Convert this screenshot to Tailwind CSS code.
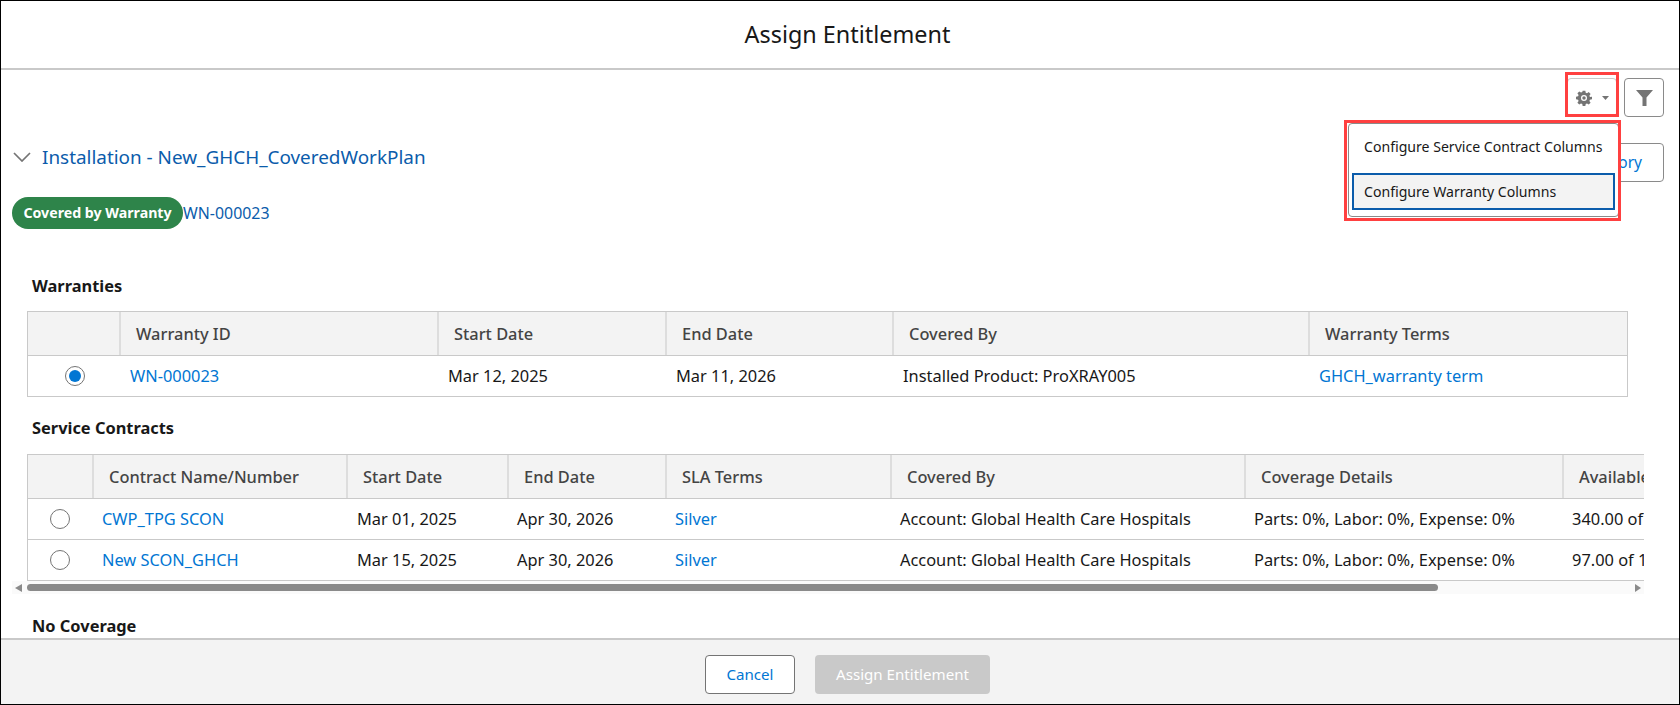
<!DOCTYPE html>
<html lang="en">
<head>
    <meta charset="UTF-8">
    <title>Assign Entitlement</title>
    <script src="https://cdn.jsdelivr.net/npm/@tailwindcss/browser@4"></script>
</head>
<body class="bg-white">
<div class="relative w-[1680px] h-[705px] flex flex-col overflow-hidden border border-black font-['Noto_Sans',sans-serif] text-[16.4px] text-[#181818]">

    <!-- header -->
    <div class="h-[69px] shrink-0 flex items-center justify-center pl-[15px] border-b-2 border-[#c9c9c9] text-[23.4px]">Assign Entitlement</div>

    <!-- body -->
    <div class="flex-1 min-h-0 overflow-hidden">
        <div class="flex justify-end gap-[7px] pt-[8px] pr-[15px]">
            <button class="w-[50px] h-[39px] flex items-center justify-center gap-[10px] rounded border border-[#c9c9c9]">
                <svg class="w-[16px] h-[16px]" viewBox="0 0 24 24" fill="#747474"><path fill-rule="evenodd" d="M10 1h4l.6 3.1 1.9.8 2.6-1.8 2.8 2.8-1.8 2.6.8 1.9L24 10v4l-3.1.6-.8 1.9 1.8 2.6-2.8 2.8-2.6-1.8-1.9.8L14 24h-4l-.6-3.1-1.9-.8-2.6 1.8-2.8-2.8 1.8-2.6-.8-1.9L0 14v-4l3.1-.6.8-1.9-1.8-2.6 2.8-2.8 2.6 1.8 1.9-.8zM12 7.5a4.5 4.5 0 1 0 0 9 4.5 4.5 0 0 0 0-9z"/><circle cx="12" cy="12" r="2.6"/></svg>
                <svg class="w-[7px] h-[4px]" viewBox="0 0 7 4" fill="#747474"><path d="M0 0h7L3.5 4z"/></svg>
            </button>
            <button class="w-[40px] h-[39px] flex items-center justify-center rounded border border-[#8a8a8a]">
                <svg class="w-[17px] h-[16px]" viewBox="0 0 17 16" fill="#747474"><path d="M0 0h17l-6.5 7.5V16h-4V7.5z"/></svg>
            </button>
        </div>

        <!-- work plan heading -->
        <div class="relative flex items-center justify-between mt-[26px] pl-[12px] pr-[15px] h-[39px]">
            <div class="flex items-center gap-[11px] pb-[11px]">
                <svg class="w-[18px] h-[10px]" viewBox="0 0 18 10" fill="none" stroke="#747474" stroke-width="1.7"><path d="M1 1l8 8 8-8"/></svg>
                <a class="text-[18.9px] text-[#0b5cab]">Installation - New_GHCH_CoveredWorkPlan</a>
            </div>
            <button class="w-[170px] h-[39px] rounded border border-[#8a8a8a] text-[15.5px] text-[#0176d3] text-right pr-[21px]">View History</button>
        </div>

        <div class="flex items-center mt-[15px] pl-[11px] h-[32px]">
            <span class="h-[32px] w-[171px] flex items-center justify-center rounded-full bg-[#2e844a] text-white font-bold text-[14.2px]">Covered by Warranty</span>
            <a class="pt-[1px] text-[15.9px] text-[#0b5cab]">WN-000023</a>
        </div>

        <div class="mt-[45px] ml-[31px] h-[24px] font-bold text-[16.4px] leading-[24px]">Warranties</div>

        <!-- warranties table -->
        <div class="mt-[13px] ml-[26px] w-[1601px] border border-[#c9c9c9]">
            <div class="grid grid-cols-[91px_318px_228px_227px_416px_319px] h-[44px] bg-[#f3f3f3] border-b border-[#c9c9c9] text-[#444444] font-medium items-center">
                <div class="h-full"></div>
                <div class="h-full flex items-center pl-[15px] pt-[1px] border-l-2 border-[#dddddd]">Warranty ID</div>
                <div class="h-full flex items-center pl-[15px] pt-[1px] border-l-2 border-[#dddddd]">Start Date</div>
                <div class="h-full flex items-center pl-[15px] pt-[1px] border-l-2 border-[#dddddd]">End Date</div>
                <div class="h-full flex items-center pl-[15px] pt-[1px] border-l-2 border-[#dddddd]">Covered By</div>
                <div class="h-full flex items-center pl-[15px] pt-[1px] border-l-2 border-[#dddddd]">Warranty Terms</div>
            </div>
            <div class="grid grid-cols-[91px_318px_228px_227px_416px_319px] h-[40px] items-center">
                <div class="flex justify-center pl-[3px]"><span class="w-[20px] h-[20px] rounded-full border border-[#747474] flex items-center justify-center"><span class="w-[12px] h-[12px] rounded-full bg-[#0176d3]"></span></span></div>
                <a class="pl-[11px] pt-[1px] text-[#0176d3]">WN-000023</a>
                <div class="pl-[11px] pt-[1px]">Mar 12, 2025</div>
                <div class="pl-[11px] pt-[1px]">Mar 11, 2026</div>
                <div class="pl-[11px] pt-[1px]">Installed Product: ProXRAY005</div>
                <a class="pl-[11px] pt-[1px] text-[#0176d3]">GHCH_warranty term</a>
            </div>
        </div>

        <div class="mt-[19px] ml-[31px] h-[24px] font-bold text-[16.4px] leading-[24px]">Service Contracts</div>

        <!-- service contracts table -->
        <div class="mt-[14px] ml-[11px] w-[1632px] overflow-hidden">
            <div class="ml-[15px] w-[1800px] border border-[#c9c9c9]">
                <div class="grid grid-cols-[64px_254px_161px_158px_225px_354px_318px_265px] h-[44px] bg-[#f3f3f3] border-b border-[#c9c9c9] text-[#444444] font-medium items-center">
                    <div class="h-full"></div>
                    <div class="h-full flex items-center pl-[15px] pt-[1px] border-l-2 border-[#dddddd]">Contract Name/Number</div>
                    <div class="h-full flex items-center pl-[15px] pt-[1px] border-l-2 border-[#dddddd]">Start Date</div>
                    <div class="h-full flex items-center pl-[15px] pt-[1px] border-l-2 border-[#dddddd]">End Date</div>
                    <div class="h-full flex items-center pl-[15px] pt-[1px] border-l-2 border-[#dddddd]">SLA Terms</div>
                    <div class="h-full flex items-center pl-[15px] pt-[1px] border-l-2 border-[#dddddd]">Covered By</div>
                    <div class="h-full flex items-center pl-[15px] pt-[1px] border-l-2 border-[#dddddd]">Coverage Details</div>
                    <div class="h-full flex items-center pl-[15px] pt-[1px] border-l-2 border-[#dddddd]">Available Hours</div>
                </div>
                <div class="grid grid-cols-[64px_254px_161px_158px_225px_354px_318px_265px] h-[41px] border-b border-[#c9c9c9] items-center">
                    <div class="flex justify-center"><span class="w-[20px] h-[20px] rounded-full border border-[#747474]"></span></div>
                    <a class="pl-[10px] pt-[1px] text-[#0176d3]">CWP_TPG SCON</a>
                    <div class="pl-[11px] pt-[1px]">Mar 01, 2025</div>
                    <div class="pl-[10px] pt-[1px]">Apr 30, 2026</div>
                    <a class="pl-[10px] pt-[1px] text-[#0176d3]">Silver</a>
                    <div class="pl-[10px] pt-[1px]">Account: Global Health Care Hospitals</div>
                    <div class="pl-[10px] pt-[1px]">Parts: 0%, Labor: 0%, Expense: 0%</div>
                    <div class="pl-[10px] pt-[1px]">340.00 of 500.00</div>
                </div>
                <div class="grid grid-cols-[64px_254px_161px_158px_225px_354px_318px_265px] h-[40px] items-center">
                    <div class="flex justify-center"><span class="w-[20px] h-[20px] rounded-full border border-[#747474]"></span></div>
                    <a class="pl-[10px] pt-[1px] text-[#0176d3]">New SCON_GHCH</a>
                    <div class="pl-[11px] pt-[1px]">Mar 15, 2025</div>
                    <div class="pl-[10px] pt-[1px]">Apr 30, 2026</div>
                    <a class="pl-[10px] pt-[1px] text-[#0176d3]">Silver</a>
                    <div class="pl-[10px] pt-[1px]">Account: Global Health Care Hospitals</div>
                    <div class="pl-[10px] pt-[1px]">Parts: 0%, Labor: 0%, Expense: 0%</div>
                    <div class="pl-[10px] pt-[1px]">97.00 of 100.00</div>
                </div>
            </div>
            <!-- scrollbar -->
            <div class="flex items-center h-[13px] bg-[#fafafa]">
                <svg class="ml-[3px] w-[7px] h-[8px]" viewBox="0 0 7 8" fill="#8a8a8a"><path d="M7 0v8L0 4z"/></svg>
                <div class="ml-[5px] w-[1411px] h-[7px] rounded-full bg-[#8a8a8a]"></div>
                <svg class="ml-[197px] w-[6px] h-[8px]" viewBox="0 0 6 8" fill="#8a8a8a"><path d="M0 0v8l6-4z"/></svg>
            </div>
        </div>

        <div class="mt-[20px] ml-[31px] h-[24px] font-bold text-[16.4px] leading-[24px]">No Coverage</div>
    </div>

    <!-- footer -->
    <div class="h-[66px] shrink-0 flex items-start justify-center gap-[20px] pt-[15px] pl-[15px] bg-[#f3f3f3] border-t-2 border-[#c9c9c9] text-[15.1px]">
        <button class="w-[90px] h-[39px] rounded border border-[#747474] bg-white text-[#0176d3]">Cancel</button>
        <button class="w-[175px] h-[39px] rounded bg-[#c9c9c9] text-white">Assign Entitlement</button>
    </div>

    <!-- settings menu -->
    <div class="absolute left-[1347px] top-[122px] w-[271px] h-[94px] pt-[4px] px-[3px] rounded bg-white border border-[#8a8a8a] text-[14.1px]">
        <div class="h-[38px] flex items-center pl-[12px]">Configure Service Contract Columns</div>
        <div class="h-[37px] mt-[7px] flex items-center pl-[10px] bg-[#f3f3f3] border-2 border-[#0b5cab]">Configure Warranty Columns</div>
    </div>

    <!-- annotation boxes -->
    <div class="absolute left-[1564px] top-[71px] w-[54px] h-[45px] border-[3px] border-[#ff4040]"></div>
    <div class="absolute left-[1343px] top-[119px] w-[277px] h-[101px] border-[3px] border-[#ff4040]"></div>
</div>
</body>
</html>
